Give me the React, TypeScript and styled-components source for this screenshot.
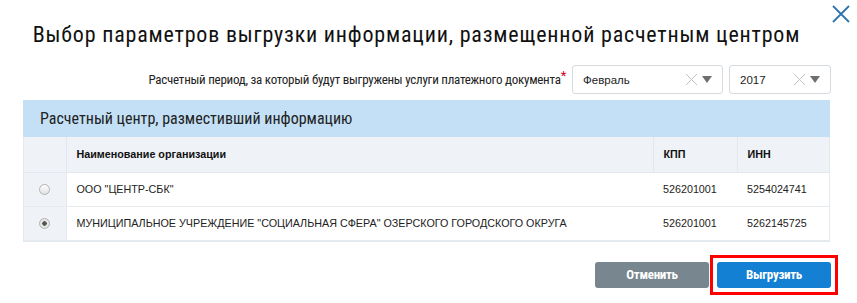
import styled, { createGlobalStyle } from "styled-components";

const GlobalStyle = createGlobalStyle`
  html, body {
    margin: 0;
    padding: 0;
    background: #fff;
  }
  body {
    font-family: "Liberation Sans", Arial, sans-serif;
    color: #222;
  }
  * {
    box-sizing: border-box;
  }
`;

const condensed = `"Roboto Condensed", Roboto, "Liberation Sans", sans-serif`;

interface Org {
  id: number;
  name: string;
  kpp: string;
  inn: string;
}

const orgs: Org[] = [
  { id: 1, name: 'ООО "ЦЕНТР-СБК"', kpp: "526201001", inn: "5254024741" },
  {
    id: 2,
    name: 'МУНИЦИПАЛЬНОЕ УЧРЕЖДЕНИЕ "СОЦИАЛЬНАЯ СФЕРА" ОЗЕРСКОГО ГОРОДСКОГО ОКРУГА',
    kpp: "526201001",
    inn: "5262145725",
  },
];

const App = () => {
  const selected = 2;

  return (
    <>
      <GlobalStyle />
      <Dialog>
        <CloseButton aria-label="Закрыть">
          <svg width="18" height="18" viewBox="0 0 18 18">
            <path d="M1 1 L17 17 M17 1 L1 17" stroke="#2f73ad" strokeWidth="1.8" fill="none" />
          </svg>
        </CloseButton>
        <Title>Выбор параметров выгрузки информации, размещенной расчетным центром</Title>

        <PeriodRow>
          <Label>
            Расчетный период, за который будут выгружены услуги платежного документа<Required>*</Required>
          </Label>
          <Select $width={151}>
            <span>Февраль</span>
            <SelectIcons>
              <ClearIcon />
              <Arrow />
            </SelectIcons>
          </Select>
          <Select $width={102}>
            <span>2017</span>
            <SelectIcons>
              <ClearIcon />
              <Arrow />
            </SelectIcons>
          </Select>
        </PeriodRow>

        <Panel>
          <PanelHeader>Расчетный центр, разместивший информацию</PanelHeader>
          <Table>
            <thead>
              <tr>
                <HeadCell $width={42}></HeadCell>
                <HeadCell>Наименование организации</HeadCell>
                <HeadCell $width={84}>КПП</HeadCell>
                <HeadCell $width={92}>ИНН</HeadCell>
              </tr>
            </thead>
            <tbody>
              {orgs.map((org) => (
                <tr key={org.id}>
                  <RadioCell>
                    <Radio $checked={org.id === selected} />
                  </RadioCell>
                  <Cell>{org.name}</Cell>
                  <Cell>{org.kpp}</Cell>
                  <Cell>{org.inn}</Cell>
                </tr>
              ))}
            </tbody>
          </Table>
        </Panel>

        <Footer>
          <Button $variant="cancel">Отменить</Button>
          <Highlight>
            <Button $variant="primary">Выгрузить</Button>
          </Highlight>
        </Footer>
      </Dialog>
    </>
  );
};

export default App;

const Dialog = styled.div`
  position: relative;
  width: 857px;
  height: 303px;
  padding: 0 27px 0 23px;
  overflow: hidden;
`;

const CloseButton = styled.button`
  position: absolute;
  top: 5px;
  right: 7px;
  padding: 0;
  border: 0;
  background: none;
  line-height: 0;
  cursor: pointer;
`;

const Title = styled.h1`
  margin: 0;
  padding: 19px 20px 0 0;
  font-family: ${condensed};
  font-size: 22px;
  font-weight: 400;
  letter-spacing: 0.8px;
  line-height: 32px;
  color: #111;
  text-align: center;
  white-space: nowrap;
`;

const PeriodRow = styled.div`
  display: flex;
  justify-content: flex-end;
  align-items: center;
  gap: 6px;
  margin-top: 14px;
  margin-right: -1px;
`;

const Label = styled.span`
  font-family: ${condensed};
  font-size: 13px;
  letter-spacing: -0.25px;
  color: #222;
`;

const Required = styled.sup`
  color: #d0021b;
  font-size: 13px;
  vertical-align: top;
  position: relative;
  top: -4px;
`;

const Select = styled.div<{ $width: number }>`
  width: ${(p) => p.$width}px;
  height: 29px;
  display: flex;
  align-items: center;
  justify-content: space-between;
  padding: 0 10px 0 10px;
  border: 1px solid #d6dbe0;
  border-radius: 3px;
  font-size: 11.5px;
  color: #222;
`;

const SelectIcons = styled.div`
  display: flex;
  align-items: center;
  gap: 4px;
`;

const ClearIcon = () => (
  <svg width="13" height="13" viewBox="0 0 13 13">
    <path d="M1 1 L12 12 M12 1 L1 12" stroke="#b9c3cc" strokeWidth="1" fill="none" />
  </svg>
);

const Arrow = styled.span`
  width: 0;
  height: 0;
  border-left: 5px solid transparent;
  border-right: 5px solid transparent;
  border-top: 7px solid #6f6f6f;
`;

const Panel = styled.div`
  margin-top: 6px;
  border: 1px solid #e4e9ee;
  border-top: 0;
`;

const PanelHeader = styled.div`
  height: 37px;
  display: flex;
  align-items: center;
  padding-left: 17px;
  background: #c3e0f6;
  margin: 0 -1px;
  font-family: ${condensed};
  font-size: 16px;
  color: #222;
`;

const Table = styled.table`
  width: 100%;
  border-collapse: collapse;
  table-layout: fixed;
  font-size: 10.75px;
`;

const HeadCell = styled.th<{ $width?: number }>`
  width: ${(p) => (p.$width ? `${p.$width}px` : "auto")};
  height: 35px;
  padding: 0 10px;
  background: #eff3f7;
  border-left: 1px solid #e2e8ee;
  border-bottom: 1px solid #e2e8ee;
  text-align: left;
  font-weight: 700;
  color: #111;

  &:first-child {
    border-left: 0;
  }
`;

const Cell = styled.td`
  height: 34px;
  padding: 0 10px;
  border-bottom: 1px solid #e6ebef;
  color: #222;
  white-space: nowrap;
`;

const RadioCell = styled.td`
  height: 34px;
  background: #eff3f7;
  border-right: 1px solid #e2e8ee;
  border-bottom: 1px solid #e6ebef;
  text-align: center;
  line-height: 0;
`;

const Radio = styled.span<{ $checked: boolean }>`
  display: inline-block;
  width: 11px;
  height: 11px;
  border-radius: 50%;
  border: 1px solid #b4b4b4;
  background: ${(p) =>
    p.$checked
      ? "radial-gradient(circle, #555 0 2px, #e9e9e9 2.5px, #dcdcdc 100%)"
      : "linear-gradient(#fdfdfd, #e2e2e2)"};
`;

const Footer = styled.div`
  display: flex;
  justify-content: flex-end;
  align-items: center;
  gap: 1px;
  margin-top: 13px;
  margin-right: -8px;
`;

const Highlight = styled.div`
  border: 3px solid #f00;
  padding: 4px;
  line-height: 0;
`;

const Button = styled.button<{ $variant: "cancel" | "primary" }>`
  width: 114px;
  height: 26px;
  border: 0;
  border-radius: 3px;
  background: ${(p) => (p.$variant === "cancel" ? "#78868f" : "#1380d4")};
  color: #fff;
  font-family: ${condensed};
  font-size: 13px;
  font-weight: 700;
  letter-spacing: -0.3px;
  cursor: pointer;
`;
